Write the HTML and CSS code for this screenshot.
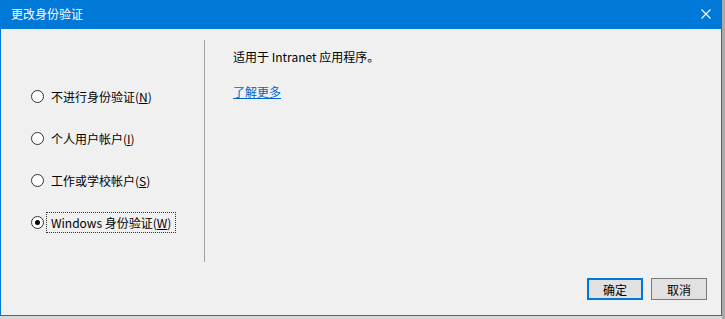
FILE: index.html
```html
<!DOCTYPE html>
<html lang="zh-CN">
<head>
  <meta charset="UTF-8">
  <title>更改身份验证</title>
  <link rel="stylesheet" href="styles.css">
</head>
<body>

  <div class="dialog">
    <div class="titlebar">
      <span class="title">更改身份验证</span>
      <svg class="close" width="10" height="10" viewBox="0 0 10 10">
        <path d="M0.5 0.5 L9.5 9.5 M9.5 0.5 L0.5 9.5" stroke="#fff" stroke-width="1.1"/>
      </svg>
    </div>

    <div class="content">
      <div class="options">
        <div class="option"><span class="radio"></span><span class="label">不进行身份验证(<u>N</u>)</span></div>
        <div class="option"><span class="radio"></span><span class="label">个人用户帐户(<u>I</u>)</span></div>
        <div class="option"><span class="radio"></span><span class="label">工作或学校帐户(<u>S</u>)</span></div>
        <div class="option"><span class="radio checked"></span><span class="label focused">Windows 身份验证(<u>W</u>)</span></div>
      </div>
      <div class="divider"></div>
      <div class="details">
        <p>适用于 Intranet 应用程序。</p>
        <a href="#">了解更多</a>
      </div>
    </div>

    <div class="footer">
      <button class="btn default">确定</button>
      <button class="btn">取消</button>
    </div>
  </div>
  <div class="under"></div>

</body>
</html>
```

FILE: styles.css
```css
body { margin: 0; background: #a9a9a9; font-family: "Noto Sans CJK SC", "Noto Sans", sans-serif; font-size: 12px; color: #000; width: 725px; height: 319px; overflow: hidden; }
.dialog { width: 720px; background: #f0f0f0; border: 1px solid #0078d7; border-top: none; }
.titlebar { height: 29px; background: #0078d7; color: #fff; display: flex; align-items: center; justify-content: space-between; padding: 0 9px 2px 10px; box-sizing: border-box; }
.title { font-size: 12px; }
.close { display: block; margin-right: 1px; }

.content { display: flex; padding-top: 11px; height: 222px; }
.options { width: 203px; padding-top: 46px; display: flex; flex-direction: column; gap: 21px; box-sizing: border-box; }
.option { display: flex; align-items: center; height: 21px; padding-left: 30px; }
.radio { width: 11px; height: 11px; border: 1px solid #333; border-radius: 50%; background: #fff; margin-right: 2px; position: relative; flex: none; }
.radio.checked::after { content: ""; position: absolute; left: 3px; top: 3px; width: 5px; height: 5px; border-radius: 50%; background: #000; }
.label { padding: 1px 4px 1px 4px; border: 1px dotted transparent; line-height: 17px; }
.label.focused { border-color: #333; }
.divider { width: 1px; background: #a0a0a0; }
.details { padding: 7px 0 0 28px; }
.details p { margin: 0 0 15px; line-height: 20px; }
.details a { color: #0066cc; text-decoration: underline; line-height: 20px; }

.footer { display: flex; justify-content: flex-end; gap: 8px; padding: 16px 14px 15px 0; }
.btn { width: 56px; height: 22px; background: #e1e1e1; border: 1px solid #adadad; font-family: inherit; font-size: 12px; padding: 0; color: #000; }
.btn.default { border: 1px solid #0078d7; box-shadow: inset 0 0 0 1px #0078d7; }
.btn:not(.default) { border-color: #7a7a7a; }
.under { height: 4px; width: 722px; background: #d8d8d8; }
```
